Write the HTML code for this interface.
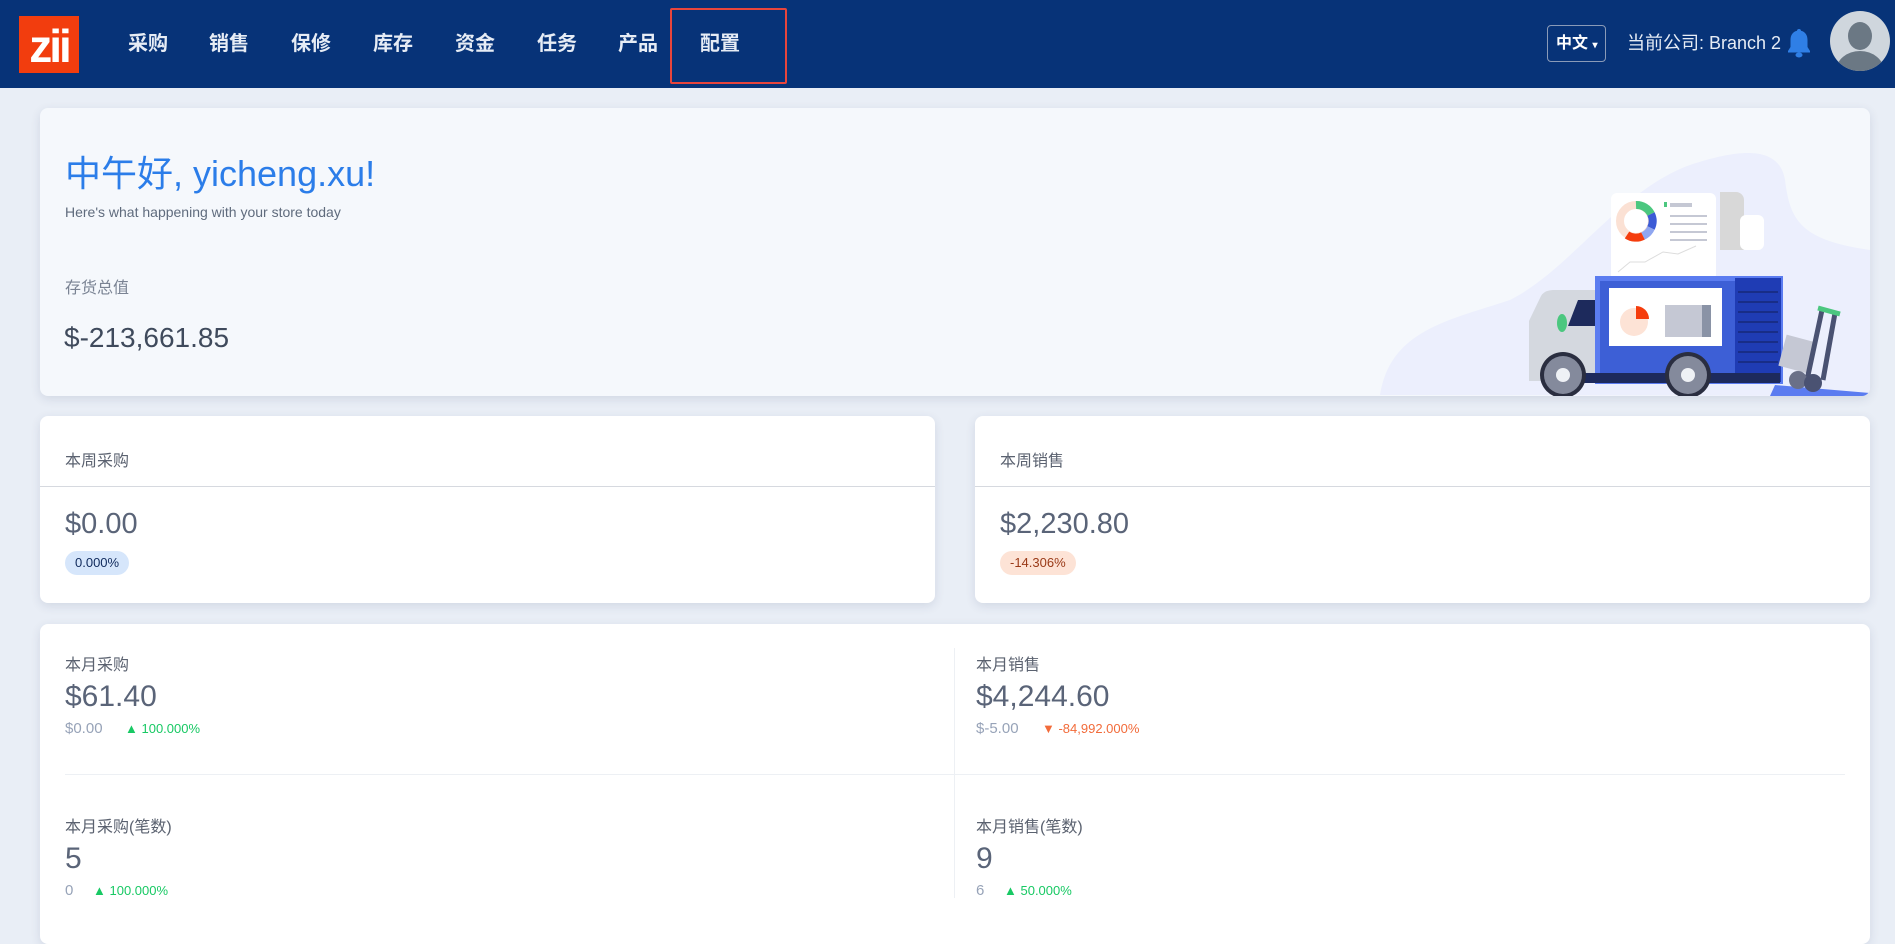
<!DOCTYPE html>
<html><head><meta charset="utf-8"><style>
*{margin:0;padding:0;box-sizing:border-box}
body{width:1895px;height:915px;overflow:hidden;background:#e9eef6;font-family:"Liberation Sans","Noto Sans CJK SC",sans-serif;position:relative}
.nav{position:absolute;left:0;top:0;width:1895px;height:88px;background:#073378}
.logo{position:absolute;left:19px;top:16px;width:60px;height:57px;background:#f23d0e;color:#fff;font:bold 46px "Liberation Sans",sans-serif;text-align:center;line-height:60px;letter-spacing:-3px}
.ni{position:absolute;top:31px;color:#e6ecf5;font-size:20px;font-weight:bold;line-height:26px}
.redbox{position:absolute;left:670px;top:8px;width:117px;height:76px;border:2px solid #e8453c;border-radius:2px}
.lang{position:absolute;left:1547px;top:25px;width:59px;height:37px;border:1px solid #8a9bb8;border-radius:4px;color:#fff;font-size:16px;font-weight:bold;line-height:35px;padding-left:8px}
.comp{position:absolute;left:1627px;top:30px;color:#e6ecf5;font-size:18px;line-height:26px}
.card{position:absolute;background:#fff;border-radius:8px;box-shadow:0 3px 10px rgba(40,60,100,.12)}
.t{position:absolute;white-space:nowrap}
.badge{position:absolute;height:24px;border-radius:12px;font-size:13px;line-height:24px;padding:0 10px}
.lbl{color:#5b6270;font-size:16px}
.big{color:#5a6478;font-size:29px}
.sub{color:#97a3b8;font-size:15px}
.up{color:#18c964;font-size:13px}
</style></head><body>
<div class="nav">
<div class="logo">zii</div>
<div class="ni" style="left:128px">采购</div>
<div class="ni" style="left:209px">销售</div>
<div class="ni" style="left:291px">保修</div>
<div class="ni" style="left:373px">库存</div>
<div class="ni" style="left:455px">资金</div>
<div class="ni" style="left:537px">任务</div>
<div class="ni" style="left:618px">产品</div>
<div class="ni" style="left:700px">配置</div>
<div class="redbox"></div>
<div class="lang">中文 <span style="font-size:10px">▾</span></div>
<div class="comp">当前公司: Branch 2</div>
<svg style="position:absolute;left:1786px;top:27px" width="26" height="32" viewBox="0 0 26 32"><path d="M13 2c-1.3 0-2 .8-2 1.8C6.5 5 4.5 8.5 4.5 13v7L2 24v1.5h22V24l-2.5-4v-7c0-4.5-2-8-6.5-9.2C15 2.8 14.3 2 13 2z" fill="#2f7fe6"/><ellipse cx="13" cy="28" rx="3.5" ry="2.5" fill="#2f7fe6"/></svg>
<svg style="position:absolute;left:1830px;top:11px" width="60" height="60" viewBox="0 0 60 60"><clipPath id="c"><circle cx="30" cy="30" r="30"/></clipPath><circle cx="30" cy="30" r="30" fill="#cfd6dd"/><g clip-path="url(#c)" fill="#6b7884"><ellipse cx="30" cy="25" rx="12" ry="14"/><ellipse cx="30" cy="60" rx="24" ry="20"/></g></svg>
</div>

<div class="card" style="left:40px;top:108px;width:1830px;height:288px;background:#f5f8fc;overflow:hidden">
<svg style="position:absolute;left:0;top:0" width="1830" height="288" viewBox="40 108 1830 288">
<path d="M1380 395C1390 330 1450 320 1510 300C1570 270 1620 190 1690 165C1750 145 1780 150 1785 180C1790 220 1800 240 1870 250L1870 396Z" fill="#eceffd"/>
<rect x="1611" y="193" width="105" height="88" rx="6" fill="#fff"/>
<path d="M1720 192h16a8 8 0 0 1 8 8v50h-24z" fill="#d8d8d8"/><rect x="1740" y="215" width="24" height="35" rx="6" fill="#fff"/>
<circle cx="1636" cy="221" r="16" fill="none" stroke="#fbe1d4" stroke-width="8"/>
<path d="M1636 205a16 16 0 0 1 15 9" stroke="#4bc77f" stroke-width="8" fill="none"/>
<path d="M1651 214a16 16 0 0 1 0 14" stroke="#3b5bd6" stroke-width="8" fill="none"/>
<path d="M1651 228a16 16 0 0 1-8 8" stroke="#8fa6f0" stroke-width="8" fill="none"/>
<path d="M1643 236a16 16 0 0 1-16 -1" stroke="#f53d0d" stroke-width="8" fill="none"/>
<rect x="1664" y="202" width="3" height="5" fill="#4bc77f"/><rect x="1670" y="203" width="22" height="4" fill="#c5c8d4"/>
<g fill="#c5c8d4"><rect x="1670" y="215" width="37" height="2"/><rect x="1670" y="223" width="37" height="2"/><rect x="1670" y="231" width="37" height="2"/><rect x="1670" y="239" width="37" height="2"/></g>
<path d="M1618 272l12-10 15 0 18-10 15 2 18-8" stroke="#ddd" fill="none"/>
<path d="M1529 381v-60l12-25c3-5 8-6 14-6h45v91z" fill="#d4d8df"/>
<path d="M1568 326l10-26h22v26z" fill="#1d2a5c"/>
<ellipse cx="1562" cy="323" rx="5" ry="9" fill="#4bc77f"/>
<rect x="1595" y="276" width="188" height="108" fill="#5b7cf0"/>
<rect x="1600" y="281" width="135" height="95" fill="#3d5fd6"/>
<rect x="1609" y="288" width="113" height="58" fill="#fff"/>
<circle cx="1634" cy="322" r="14" fill="#fde3d6"/><path d="M1636 306v13h13a13 13 0 0 0-13-13z" fill="#f53d0d"/>
<rect x="1665" y="305" width="46" height="32" fill="#c5c8d4"/><rect x="1702" y="305" width="9" height="32" fill="#8a93a6"/>
<rect x="1735" y="278" width="46" height="104" fill="#1f3cb4"/>
<g stroke="#16287a" stroke-width="1.5"><path d="M1738 292h40M1738 302h40M1738 312h40M1738 322h40M1738 332h40M1738 342h40M1738 352h40M1738 362h40"/></g>
<rect x="1580" y="373" width="200" height="10" fill="#1d2a5c"/>
<path d="M1775 385L1870 393L1870 396L1770 396Z" fill="#5b7cf0"/>
<circle cx="1563" cy="375" r="23" fill="#2a2e40"/><circle cx="1563" cy="375" r="19" fill="#848a9c"/><circle cx="1563" cy="375" r="7" fill="#eef1f5"/>
<circle cx="1688" cy="375" r="23" fill="#2a2e40"/><circle cx="1688" cy="375" r="19" fill="#848a9c"/><circle cx="1688" cy="375" r="7" fill="#eef1f5"/>
<rect x="1782" y="338" width="30" height="32" fill="#c5c8d4" transform="rotate(15 1797 354)"/>
<path d="M1822 310l-15 70M1835 313l-12 67" stroke="#4a5272" stroke-width="5"/>
<path d="M1818 308l22 6" stroke="#4bc77f" stroke-width="5"/>
<circle cx="1798" cy="380" r="9" fill="#6a7088"/><circle cx="1813" cy="383" r="9" fill="#4a5272"/>
</svg>
<div class="t" style="left:25px;top:44px;font-size:36px;color:#2b7de9;line-height:44px">中午好, yicheng.xu!</div>
<div class="t" style="left:25px;top:96px;font-size:14px;color:#5f6b7d">Here's what happening with your store today</div>
<div class="t" style="left:25px;top:166px;font-size:16px;color:#7a8393">存货总值</div>
<div class="t" style="left:24px;top:214px;font-size:28px;color:#3f4a5c;font-weight:500">$-213,661.85</div>
</div>

<div class="card" style="left:40px;top:416px;width:895px;height:187px">
<div class="t lbl" style="left:25px;top:31px">本周采购</div>
<div style="position:absolute;left:0;top:70px;width:100%;height:1px;background:#d6d9df"></div>
<div class="t big" style="left:25px;top:92px">$0.00</div>
<div class="badge" style="left:25px;top:135px;background:#d6e6fb;color:#102a5c">0.000%</div>
</div>
<div class="card" style="left:975px;top:416px;width:895px;height:187px">
<div class="t lbl" style="left:25px;top:31px">本周销售</div>
<div style="position:absolute;left:0;top:70px;width:100%;height:1px;background:#d6d9df"></div>
<div class="t big" style="left:25px;top:92px">$2,230.80</div>
<div class="badge" style="left:25px;top:135px;background:#fde3d6;color:#9a3a18">-14.306%</div>
</div>

<div class="card" style="left:40px;top:624px;width:1830px;height:320px">
<div style="position:absolute;left:914px;top:24px;width:1px;height:250px;background:#edf0f4"></div>
<div style="position:absolute;left:25px;top:150px;width:1780px;height:1px;background:#edf0f4"></div>
<div class="t lbl" style="left:25px;top:27px">本月采购</div>
<div class="t big" style="left:25px;top:56px;font-size:30px">$61.40</div>
<div class="t sub" style="left:25px;top:96px">$0.00</div>
<div class="t up" style="left:85px;top:97px">▲ 100.000%</div>
<div class="t lbl" style="left:25px;top:189px">本月采购(笔数)</div>
<div class="t big" style="left:25px;top:218px;font-size:30px">5</div>
<div class="t sub" style="left:25px;top:258px">0</div>
<div class="t up" style="left:53px;top:259px">▲ 100.000%</div>
<div class="t lbl" style="left:936px;top:27px">本月销售</div>
<div class="t big" style="left:936px;top:56px;font-size:30px">$4,244.60</div>
<div class="t sub" style="left:936px;top:96px">$-5.00</div>
<div class="t up" style="left:1002px;top:97px;color:#f26b3a">▼ -84,992.000%</div>
<div class="t lbl" style="left:936px;top:189px">本月销售(笔数)</div>
<div class="t big" style="left:936px;top:218px;font-size:30px">9</div>
<div class="t sub" style="left:936px;top:258px">6</div>
<div class="t up" style="left:964px;top:259px">▲ 50.000%</div>
</div>
</body></html>
